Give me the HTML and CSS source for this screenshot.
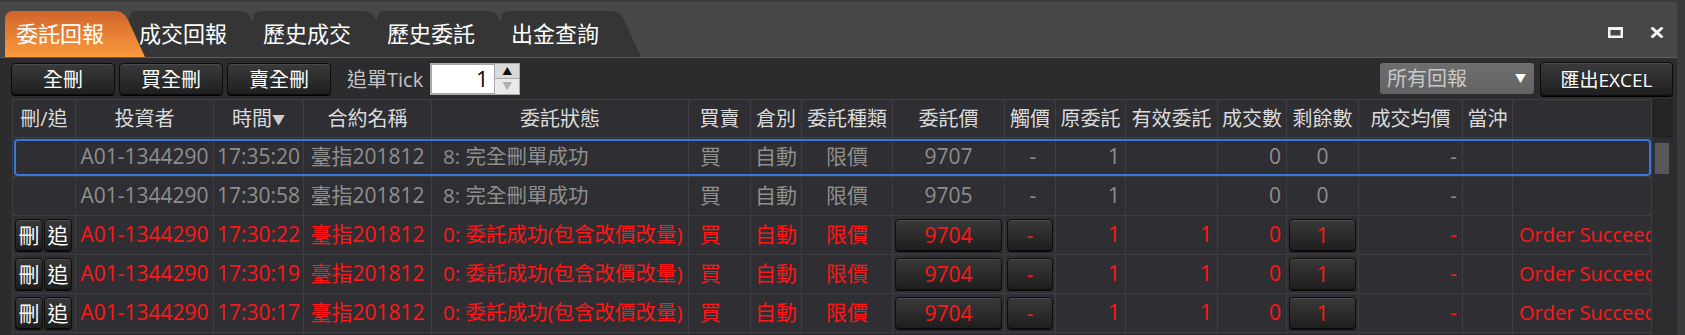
FILE: index.html
```html
<!DOCTYPE html>
<html lang="zh-Hant">
<head>
    <meta charset="UTF-8">
    <meta name="viewport" content="width=device-width, initial-scale=1.0">
    <title>委託回報</title>
    <link rel="stylesheet" href="styles.css">
</head>
<body>

<div class="app">
    <div class="tabbar">
        <div class="tab active">委託回報</div>
        <div class="tab">成交回報</div>
        <div class="tab">歷史成交</div>
        <div class="tab">歷史委託</div>
        <div class="tab">出金查詢</div>
        <div class="win-ctrls">
            <svg width="15" height="11" viewBox="0 0 15 11"><rect x="1.25" y="1.5" width="12.5" height="8.25" fill="none" stroke="#f2f2f2" stroke-width="2.5"/><rect x="0" y="0" width="15" height="3" fill="#f2f2f2"/></svg>
            <svg width="14" height="11" viewBox="0 0 14 11"><path d="M1.5 0.5 L12.5 10.5 M12.5 0.5 L1.5 10.5" stroke="#f2f2f2" stroke-width="3"/></svg>
        </div>
    </div>

    <div class="panel">
        <div class="toolbar">
            <button class="btn tb-btn">全刪</button>
            <button class="btn tb-btn">買全刪</button>
            <button class="btn tb-btn">賣全刪</button>
            <span class="tick-label">追單Tick</span>
            <div class="spinner">
                <div class="spin-input">1</div>
                <div class="spin-btns">
                    <span class="spin-up">&#9650;</span>
                    <span class="spin-down">&#9660;</span>
                </div>
            </div>
            <div class="spacer"></div>
            <div class="select">所有回報<span class="caret">&#9660;</span></div>
            <button class="btn excel">匯出EXCEL</button>
        </div>

        <div class="grid-area">
            <div class="grid">
                <div class="row head">
                    <div class="c">刪/追</div>
                    <div class="c">投資者</div>
                    <div class="c">時間<span class="sort">&#9660;</span></div>
                    <div class="c">合約名稱</div>
                    <div class="c">委託狀態</div>
                    <div class="c">買賣</div>
                    <div class="c">倉別</div>
                    <div class="c">委託種類</div>
                    <div class="c">委託價</div>
                    <div class="c">觸價</div>
                    <div class="c">原委託</div>
                    <div class="c">有效委託</div>
                    <div class="c">成交數</div>
                    <div class="c">剩餘數</div>
                    <div class="c">成交均價</div>
                    <div class="c">當沖</div>
                    <div class="c"></div>
                </div>

                <div class="row gray sel">
                    <div class="c"></div>
                    <div class="c">A01-1344290</div>
                    <div class="c">17:35:20</div>
                    <div class="c">臺指201812</div>
                    <div class="c lft status">8: 完全刪單成功</div>
                    <div class="c lft">買</div>
                    <div class="c">自動</div>
                    <div class="c">限價</div>
                    <div class="c">9707</div>
                    <div class="c dash">-</div>
                    <div class="c rgt">1</div>
                    <div class="c rgt"></div>
                    <div class="c rgt">0</div>
                    <div class="c">0</div>
                    <div class="c rgt">-</div>
                    <div class="c"></div>
                    <div class="c lft2"></div>
                </div>

                <div class="row gray">
                    <div class="c"></div>
                    <div class="c">A01-1344290</div>
                    <div class="c">17:30:58</div>
                    <div class="c">臺指201812</div>
                    <div class="c lft status">8: 完全刪單成功</div>
                    <div class="c lft">買</div>
                    <div class="c">自動</div>
                    <div class="c">限價</div>
                    <div class="c">9705</div>
                    <div class="c dash">-</div>
                    <div class="c rgt">1</div>
                    <div class="c rgt"></div>
                    <div class="c rgt">0</div>
                    <div class="c">0</div>
                    <div class="c rgt">-</div>
                    <div class="c"></div>
                    <div class="c lft2"></div>
                </div>

                <div class="row red">
                    <div class="c acts"><span class="cbtn act">刪</span><span class="cbtn act">追</span></div>
                    <div class="c">A01-1344290</div>
                    <div class="c">17:30:22</div>
                    <div class="c">臺指201812</div>
                    <div class="c lft status">0: 委託成功(包含改價改量)</div>
                    <div class="c lft">買</div>
                    <div class="c">自動</div>
                    <div class="c">限價</div>
                    <div class="c bc"><span class="cbtn">9704</span></div>
                    <div class="c bc"><span class="cbtn">-</span></div>
                    <div class="c rgt">1</div>
                    <div class="c rgt">1</div>
                    <div class="c rgt">0</div>
                    <div class="c bc"><span class="cbtn">1</span></div>
                    <div class="c rgt">-</div>
                    <div class="c"></div>
                    <div class="c lft2">Order Succeeded</div>
                </div>

                <div class="row red">
                    <div class="c acts"><span class="cbtn act">刪</span><span class="cbtn act">追</span></div>
                    <div class="c">A01-1344290</div>
                    <div class="c">17:30:19</div>
                    <div class="c">臺指201812</div>
                    <div class="c lft status">0: 委託成功(包含改價改量)</div>
                    <div class="c lft">買</div>
                    <div class="c">自動</div>
                    <div class="c">限價</div>
                    <div class="c bc"><span class="cbtn">9704</span></div>
                    <div class="c bc"><span class="cbtn">-</span></div>
                    <div class="c rgt">1</div>
                    <div class="c rgt">1</div>
                    <div class="c rgt">0</div>
                    <div class="c bc"><span class="cbtn">1</span></div>
                    <div class="c rgt">-</div>
                    <div class="c"></div>
                    <div class="c lft2">Order Succeeded</div>
                </div>

                <div class="row red">
                    <div class="c acts"><span class="cbtn act">刪</span><span class="cbtn act">追</span></div>
                    <div class="c">A01-1344290</div>
                    <div class="c">17:30:17</div>
                    <div class="c">臺指201812</div>
                    <div class="c lft status">0: 委託成功(包含改價改量)</div>
                    <div class="c lft">買</div>
                    <div class="c">自動</div>
                    <div class="c">限價</div>
                    <div class="c bc"><span class="cbtn">9704</span></div>
                    <div class="c bc"><span class="cbtn">-</span></div>
                    <div class="c rgt">1</div>
                    <div class="c rgt">1</div>
                    <div class="c rgt">0</div>
                    <div class="c bc"><span class="cbtn">1</span></div>
                    <div class="c rgt">-</div>
                    <div class="c"></div>
                    <div class="c lft2">Order Succeeded</div>
                </div>

                <div class="row red">
                    <div class="c acts"><span class="cbtn act">刪</span><span class="cbtn act">追</span></div>
                    <div class="c"></div>
                    <div class="c"></div>
                    <div class="c"></div>
                    <div class="c lft"></div>
                    <div class="c lft"></div>
                    <div class="c"></div>
                    <div class="c"></div>
                    <div class="c bc"><span class="cbtn"></span></div>
                    <div class="c bc"><span class="cbtn"></span></div>
                    <div class="c rgt"></div>
                    <div class="c rgt"></div>
                    <div class="c rgt"></div>
                    <div class="c bc"><span class="cbtn"></span></div>
                    <div class="c rgt"></div>
                    <div class="c"></div>
                    <div class="c lft2"></div>
                </div>
            </div>

            <div class="vscroll">
                <div class="vs-head"></div>
                <div class="vs-thumb"></div>
            </div>
        </div>
    </div>
</div>

</body>
</html>
```

FILE: styles.css
```css
body {
    margin: 0;
    padding: 0;
    height: 335px;
    overflow: hidden;
    background-color: #474747;
    font-family: "Open Sans", "Noto Sans CJK TC", sans-serif;
    color: #fff;
}
.app {
    border-right: 8px solid #3a3a3a;
}

/* tabs */
.tabbar {
    display: flex;
    align-items: flex-end;
    height: 58px;
    box-sizing: border-box;
    padding-left: 5px;
    background-color: #474747;
    border-top: 2px solid #3b3b3b;
    border-bottom: 1px solid #5c5c5c;
}
.tab {
    position: relative;
    flex-shrink: 0;
    width: 108px;
    height: 46px;
    margin-right: 16px;
    padding-left: 10px;
    box-sizing: border-box;
    background: #353535;
    border-top-left-radius: 8px;
    font-size: 22px;
    line-height: 44px;
    white-space: nowrap;
}
.tab::after {
    content: '';
    position: absolute;
    top: 0;
    right: -32px;
    width: 32px;
    height: 46px;
    background: inherit;
    clip-path: path('M0 0 C8 0 12 2 16 11 L32 46 L0 46 Z');
}
.tab.active {
    z-index: 2;
    padding-left: 11px;
    background: linear-gradient(#d1642b, #fa9b3d);
}
.win-ctrls {
    align-self: flex-start;
    margin: 25px 13px 0 auto;
    display: flex;
    gap: 27px;
}

/* panel + toolbar */
.panel {
    height: 277px;
    background-color: #2c2c2e;
}
.toolbar {
    display: flex;
    align-items: center;
    height: 41px;
    padding: 0 4px 0 11px;
}
.btn {
    flex-shrink: 0;
    height: 32px;
    border: 1px solid #0c0c0c;
    border-radius: 4px;
    background: linear-gradient(#3a3a3a, #1f1f1f);
    box-shadow: inset 0 1px 0 #4a4a4a, 0 1px 0 #000;
    color: #fff;
    font-family: "Open Sans", "Noto Sans CJK TC", sans-serif;
    font-size: 20px;
    padding: 0;
}
.tb-btn {
    width: 104px;
    margin-right: 4px;
}
.tick-label {
    margin-left: 12px;
    color: #c4c4c4;
    font-size: 20px;
}
.spinner {
    display: flex;
    margin-left: 7px;
    height: 32px;
}
.spin-input {
    width: 56px;
    background: #fff;
    border: 2px solid #a9a9a9;
    border-right: none;
    color: #000;
    font-size: 21px;
    line-height: 28px;
    text-align: right;
    padding-right: 6px;
}
.spin-btns {
    width: 26px;
    display: flex;
    flex-direction: column;
    gap: 1px;
    background: #a9a9a9;
    padding: 1px;
    box-sizing: border-box;
}
.spin-btns span {
    flex: 1;
    font-size: 10px;
    line-height: 14px;
    text-align: center;
}
.spin-up {
    background: #dadada;
    color: #111;
}
.spin-down {
    background: #e9e9e9;
    color: #b0b0b0;
}
.spacer {
    flex: 1;
}
.select {
    width: 154px;
    height: 31px;
    box-sizing: border-box;
    padding: 0 8px 0 7px;
    margin-right: 6px;
    border-radius: 3px;
    background: linear-gradient(#6e6e6e, #636363);
    color: #c8c8c8;
    font-size: 20px;
    line-height: 31px;
    display: flex;
    justify-content: space-between;
}
.caret {
    font-size: 11px;
    color: #fff;
}
.excel {
    width: 133px;
    height: 34px;
    font-size: 19px;
}

/* grid */
.grid-area {
    display: flex;
    padding: 0 4px 0 12px;
}
.grid {
    width: 1640px;
    border-top: 1px solid #3d3d42;
    border-left: 1px solid #3d3d42;
    background-color: #2f2f33;
}
.row {
    display: grid;
    grid-template-columns: 63px 138px 90px 128px 257px 62px 51px 91px 112px 51px 70px 92px 69px 72px 104px 50px 139px;
    height: 39px;
    font-size: 21px;
}
.row.head {
    height: 38px;
    font-size: 20px;
    color: #dadada;
}
.c {
    border-right: 1px solid #3d3d42;
    border-bottom: 1px solid #3d3d42;
    overflow: hidden;
    white-space: nowrap;
    text-align: center;
    line-height: 37px;
}
.lft {
    text-align: left;
    padding-left: 11px;
}
.status {
    font-size: 20.5px;
}
.lft2 {
    text-align: left;
    padding-left: 6px;
    font-size: 20px;
}
.rgt {
    text-align: right;
    padding-right: 5px;
}
.dash {
    padding-left: 6px;
}
.sort {
    font-size: 13px;
    color: #d0d0d0;
    vertical-align: 2px;
}
.gray {
    color: #8e8e8e;
}
.red {
    color: #ff1616;
}
.sel {
    position: relative;
    z-index: 1;
    border-radius: 5px;
    outline: 2px solid #3477dd;
    outline-offset: -3px;
}
.bc {
    padding: 3px 2px 2px 2px;
}
.acts {
    display: flex;
    gap: 1px;
    padding: 3px 0 2px 2px;
}
.cbtn {
    display: block;
    height: 32px;
    box-sizing: border-box;
    border: 1px solid #0e0e0e;
    border-radius: 4px;
    background: linear-gradient(#393939, #1e1e1e);
    box-shadow: inset 0 1px 0 #4c4c4c, 0 1px 0 #050505;
    line-height: 30px;
    text-align: center;
}
.cbtn.act {
    width: 28px;
    color: #fff;
}
.vscroll {
    width: 21px;
    display: flex;
    flex-direction: column;
    background-color: #2d2d30;
}
.vs-head {
    flex-shrink: 0;
    height: 39px;
    background-color: #242426;
}
.vs-thumb {
    flex-shrink: 0;
    margin: 5px 4px 0 3px;
    height: 31px;
    background-color: #585858;
}
```
